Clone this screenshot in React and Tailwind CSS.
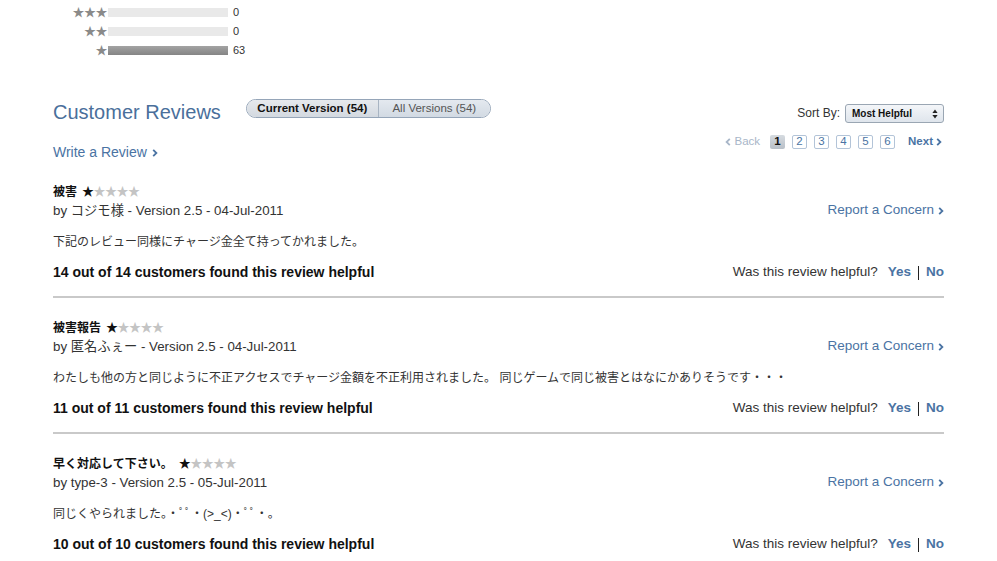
import React from "react";

const FONT = { fontFamily: '"Liberation Sans", "Noto Sans CJK JP", Arial, sans-serif' };

function Chevron({ className = "" }) {
  return (
    <svg className={className} width="6" height="8" viewBox="0 0 6 8">
      <path d="M1.2 0.8 L4.4 4 L1.2 7.2" fill="none" stroke="currentColor" strokeWidth="1.8" />
    </svg>
  );
}

function ChevronLeft({ className = "" }) {
  return (
    <svg className={className} width="6" height="8" viewBox="0 0 6 8">
      <path d="M4.8 0.8 L1.6 4 L4.8 7.2" fill="none" stroke="currentColor" strokeWidth="1.8" />
    </svg>
  );
}

function RatingRow({ stars, count, pct }) {
  return (
    <div className="flex items-center h-[19px]">
      <div className="w-[55px] text-right text-[12px] leading-none text-[#8a8a8a] tracking-[-0.5px] pr-[1px]">
        {"★".repeat(stars)}
      </div>
      <div className="w-[120px] h-[9px] bg-[#e9e9e9]">
        <div className="h-full bg-gradient-to-b from-[#a3a3a3] to-[#858585]" style={{ width: pct + "%" }} />
      </div>
      <div className="ml-[5px] text-[11px] text-[#333]">{count}</div>
    </div>
  );
}

function Stars() {
  return (
    <span className="text-[12px] leading-none tracking-[-0.5px]">
      <span className="text-[#111]">★</span>
      <span className="text-[#c4c4c4]">★★★★</span>
    </span>
  );
}

function Review({ title, titleGap = "ml-[5px]", by, body, helpful, last }) {
  return (
    <div>
      <div className="flex items-center h-[19px] text-[12px] font-bold text-[#111]">
        <span>{title}</span>
        <span className={titleGap}><Stars /></span>
      </div>
      <div className="flex items-center justify-between h-[19px]">
        <span className="text-[#333] text-[13.3px]">{by}</span>
        <span className="flex items-center text-[#4a73a3] text-[13.5px]">
          Report a Concern<Chevron className="ml-[4px] mt-[1px]" />
        </span>
      </div>
      <div className="mt-[12px] h-[19px] flex items-center text-[12px] text-[#333]">{body}</div>
      <div className="mt-[12px] flex items-center justify-between h-[19px]">
        <span className="font-bold text-[14px] text-[#111]">{helpful}</span>
        <span className="flex items-center text-[13.5px]">
          <span className="text-[#333]">Was this review helpful?</span>
          <span className="ml-[10px] font-bold text-[#4a73a3]">Yes</span>
          <span className="mx-[7px] w-px h-[14px] bg-[#222]" />
          <span className="font-bold text-[#4a73a3]">No</span>
        </span>
      </div>
      {!last && <div className="mt-[14px] mb-[20px] h-[2px] bg-[#c9c9c9]" />}
    </div>
  );
}

export default function App() {
  return (
    <div className="w-[997px] h-[561px] bg-white overflow-hidden" style={FONT}>
      <div className="ml-[53px] w-[891px]">
        <div className="pt-[3px]">
          <RatingRow stars={3} count={0} pct={0} />
          <RatingRow stars={2} count={0} pct={0} />
          <RatingRow stars={1} count={63} pct={100} />
        </div>

        <div className="mt-[39px] flex justify-between">
          <div>
            <div className="flex items-start">
              <h2 className="text-[20px] leading-[24px] mt-[1px] text-[#4a6f9b]">Customer Reviews</h2>
              <div className="ml-[25px] flex h-[19px] rounded-full border border-[#95a5b8] overflow-hidden text-[11.5px]">
                <div className="w-[132px] flex items-center justify-center font-bold text-[#111] bg-gradient-to-b from-[#e6e9ed] to-[#d3d9e0] border-r border-[#a8b4c2]">
                  Current Version (54)
                </div>
                <div className="w-[111px] flex items-center justify-center text-[#555] bg-gradient-to-b from-[#e4e9ef] to-[#d2dae3]">
                  All Versions (54)
                </div>
              </div>
            </div>
            <div className="mt-[18px] flex items-center text-[14px] text-[#4a73a3]">
              Write a Review<Chevron className="ml-[5px] mt-[1px]" />
            </div>
          </div>

          <div className="flex flex-col items-end">
            <div className="flex items-center mt-[5px]">
              <span className="text-[12px] text-[#333] -mt-[1px]">Sort By:</span>
              <div className="ml-[5px] w-[99px] h-[19px] rounded-[3px] border border-[#9aa6b3] bg-gradient-to-b from-[#f4f6f9] to-[#dfe5ec] flex items-center justify-between pl-[6px] pr-[5px]">
                <span className="text-[10px] font-bold text-[#111]">Most Helpful</span>
                <svg width="6" height="10" viewBox="0 0 6 10">
                  <path d="M3 0.5 L5.6 4 L0.4 4 Z" fill="#222" />
                  <path d="M3 9.5 L5.6 6 L0.4 6 Z" fill="#222" />
                </svg>
              </div>
            </div>
            <div className="mt-[10px] flex items-center text-[11.5px] mr-[2px]">
              <span className="flex items-center text-[#a8b6c8]">
                <ChevronLeft className="mr-[3px]" />Back
              </span>
              <div className="ml-[10px] flex gap-[7px]">
                {[1, 2, 3, 4, 5, 6].map((n) =>
                  n === 1 ? (
                    <span key={n} className="w-[15px] h-[14px] flex items-center justify-center rounded-[2px] bg-gradient-to-b from-[#d6dbe0] to-[#b9c0c8] font-bold text-[#111]">
                      {n}
                    </span>
                  ) : (
                    <span key={n} className="w-[15px] h-[14px] flex items-center justify-center rounded-[2px] border border-[#b3c4d8] text-[#4a73a3]">
                      {n}
                    </span>
                  )
                )}
              </div>
              <span className="ml-[13px] flex items-center font-bold text-[#4a73a3]">
                Next<Chevron className="ml-[3px]" />
              </span>
            </div>
          </div>
        </div>

        <div className="mt-[19px]">
          <Review
            title="被害"
            by="by コジモ様 - Version 2.5 - 04-Jul-2011"
            body="下記のレビュー同様にチャージ金全て持ってかれました。"
            helpful="14 out of 14 customers found this review helpful"
          />
          <Review
            title="被害報告"
            by="by 匿名ふぇー - Version 2.5 - 04-Jul-2011"
            body="わたしも他の方と同じように不正アクセスでチャージ金額を不正利用されました。 同じゲームで同じ被害とはなにかありそうです・・・"
            helpful="11 out of 11 customers found this review helpful"
          />
          <Review
            title="早く対応して下さい。"
            titleGap="ml-[6px]"
            by="by type-3 - Version 2.5 - 05-Jul-2011"
            body="同じくやられました。・ﾟﾟ・(>_<)・ﾟﾟ・。"
            helpful="10 out of 10 customers found this review helpful"
            last
          />
        </div>
      </div>
    </div>
  );
}
